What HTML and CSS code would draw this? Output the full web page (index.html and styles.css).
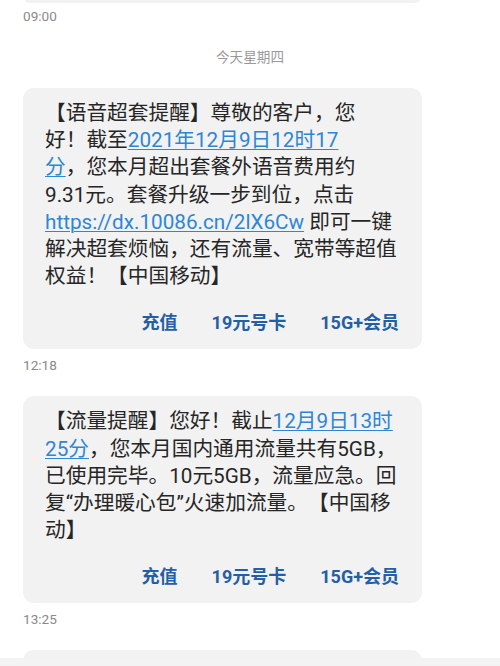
FILE: index.html
```html
<!DOCTYPE html>
<html lang="zh-CN">
<head>
<meta charset="utf-8">
<link rel="stylesheet" href="styles.css">
</head>
<body>
<div class="thread">
  <div class="bubble stub"></div>
  <div class="time first">09:00</div>
  <div class="date">今天星期四</div>

  <div class="bubble">
    <div class="msg">【语音超套提醒】尊敬的客户，您<br>好！截至<a class="link">2021年12月9日12时17<br>分</a>，您本月超出套餐外语音费用约<br>9.31元。套餐升级一步到位，点击<br><a class="link">https://dx.10086.cn/2lX6Cw</a> 即可一键<br>解决超套烦恼，还有流量、宽带等超值<br>权益！【中国移动】</div>
    <div class="actions">
      <span class="action">充值</span>
      <span class="action">19元号卡</span>
      <span class="action">15G+会员</span>
    </div>
  </div>

  <div class="time">12:18</div>

  <div class="bubble">
    <div class="msg">【流量提醒】您好！截止<a class="link">12月9日13时<br>25分</a>，您本月国内通用流量共有5GB，<br>已使用完毕。10元5GB，流量应急。回<br>复“办理暖心包”火速加流量。【中国移<br>动】</div>
    <div class="actions">
      <span class="action">充值</span>
      <span class="action">19元号卡</span>
      <span class="action">15G+会员</span>
    </div>
  </div>

  <div class="time">13:25</div>

  <div class="bubble tail"></div>
</div>
<div class="bottombar"></div>
</body>
</html>
```

FILE: styles.css
```css
html, body {
  margin: 0;
  padding: 0;
  background: #ffffff;
}

body {
  width: 500px;
  height: 666px;
  overflow: hidden;
  font-family: Roboto, "Noto Sans CJK SC", sans-serif;
  color: #262626;
}

.thread {
  display: flex;
  flex-direction: column;
  padding-left: 23px;
}

.bubble {
  width: 399px;
  box-sizing: border-box;
  background: #f2f2f2;
  border-radius: 11px;
  padding: 12px 23px 13px 22px;
}

.bubble.stub {
  height: 3px;
  padding: 0;
  width: 395px;
  margin-left: 2px;
  border-radius: 0 0 6px 6px / 0 0 3px 3px;
}

.bubble.tail {
  height: 40px;
  padding: 0;
}

.time {
  margin-top: 6px;
  margin-bottom: 21px;
  height: 20px;
  line-height: 20px;
  font-size: 13.6px;
  color: #8a8a8a;
}

.time.first {
  margin-top: 3px;
}

.date {
  margin-bottom: 21px;
  margin-left: -23px;
  width: 500px;
  text-align: center;
  height: 20px;
  line-height: 20px;
  font-size: 13.6px;
  color: #999999;
}

.msg {
  font-size: 20.7px;
  line-height: 27.2px;
  white-space: nowrap;
  color: #262626;
  text-spacing-trim: space-all;
}

.link {
  color: #2d86d6;
  text-decoration: underline;
  text-decoration-thickness: 1px;
  text-underline-offset: 2px;
}

.actions {
  display: flex;
  justify-content: flex-end;
  gap: 34px;
  margin-top: 19px;
  height: 27px;
  line-height: 27px;
  font-size: 18px;
  font-weight: 700;
  color: #245fa6;
}

.bottombar {
  position: fixed;
  left: 0;
  right: 0;
  bottom: 0;
  height: 8px;
  background: #f3f3f3;
}
```
